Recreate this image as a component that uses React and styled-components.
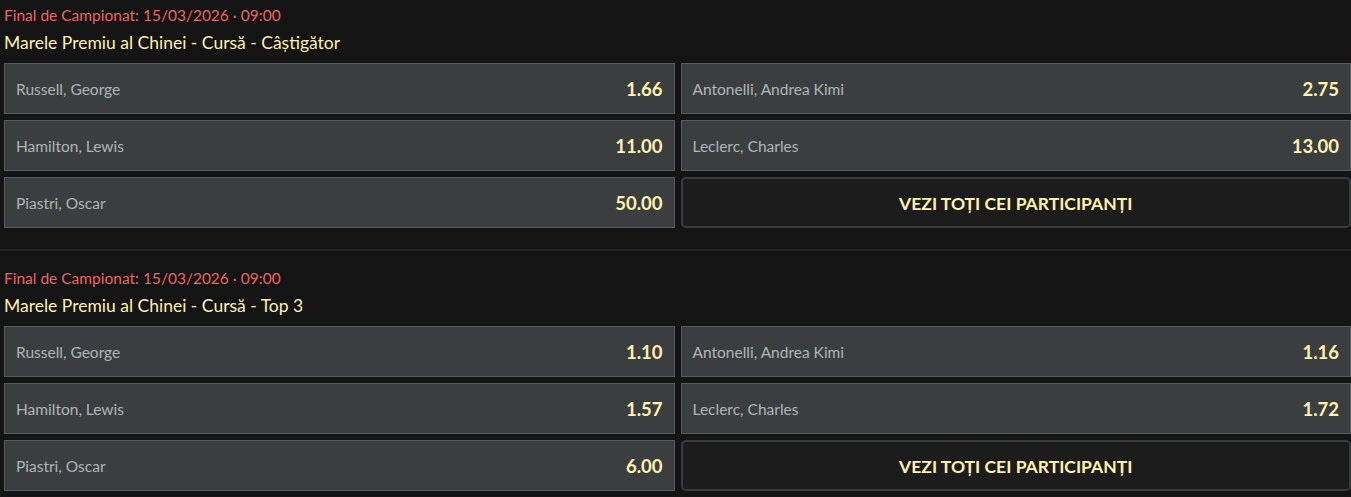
import React from "react";
import styled, { createGlobalStyle } from "styled-components";

const Global = createGlobalStyle`
  html, body { margin: 0; padding: 0; background: #141414; }
  body { font-family: Lato, "Noto Sans", sans-serif; }
`;

const Page = styled.div`
  background: #141414;
  width: 1351px;
  height: 497px;
  overflow: hidden;
`;

const Section = styled.section`
  padding: 5px 0 21px 4px;
  border-bottom: 2px solid #262626;
  & + & {
    padding-top: 17px;
    border-bottom: none;
  }
`;

const Meta = styled.div`
  color: #ec6464;
  font-size: 15.5px;
  line-height: 20px;
  font-weight: 400;
`;

const Title = styled.div`
  color: #fff1b0;
  font-size: 17.5px;
  line-height: 22px;
  margin-top: 7px;
  font-weight: 400;
`;

const Grid = styled.div`
  margin-top: 9px;
  display: grid;
  grid-template-columns: 1fr 1fr;
  grid-auto-rows: 51px;
  gap: 6px;
`;

const Outcome = styled.div`
  display: flex;
  align-items: center;
  justify-content: space-between;
  background: #3b3e3f;
  border: 1px solid #585b5c;
  padding: 0 11px 0 11px;
  cursor: pointer;
`;

const Name = styled.span`
  color: #b1b4b6;
  font-size: 15.5px;
  padding-top: 1px;
`;

const Odds = styled.span`
  color: #fff1b0;
  font-size: 18.5px;
  font-weight: 700;
  padding-top: 1px;
`;

const AllButton = styled.button`
  display: flex;
  align-items: center;
  justify-content: center;
  background: #1c1c1c;
  border: 2px solid #383b3c;
  border-radius: 5px;
  color: #fff1b0;
  font-family: inherit;
  font-size: 17.5px;
  font-weight: 700;
  text-transform: uppercase;
  padding: 2px 0 0 0;
  margin: 0;
  cursor: pointer;
`;

const markets = [
  {
    title: "Marele Premiu al Chinei - Cursă - Câștigător",
    odds: ["1.66", "2.75", "11.00", "13.00", "50.00"],
  },
  {
    title: "Marele Premiu al Chinei - Cursă - Top 3",
    odds: ["1.10", "1.16", "1.57", "1.72", "6.00"],
  },
];

const drivers = [
  "Russell, George",
  "Antonelli, Andrea Kimi",
  "Hamilton, Lewis",
  "Leclerc, Charles",
  "Piastri, Oscar",
];

export default function App() {
  return (
    <Page>
      <Global />
      {markets.map((m) => (
        <Section key={m.title}>
          <Meta>Final de Campionat: 15/03/2026 · 09:00</Meta>
          <Title>{m.title}</Title>
          <Grid>
            {drivers.map((d, i) => (
              <Outcome key={d}>
                <Name>{d}</Name>
                <Odds>{m.odds[i]}</Odds>
              </Outcome>
            ))}
            <AllButton>Vezi toți cei participanți</AllButton>
          </Grid>
        </Section>
      ))}
    </Page>
  );
}
